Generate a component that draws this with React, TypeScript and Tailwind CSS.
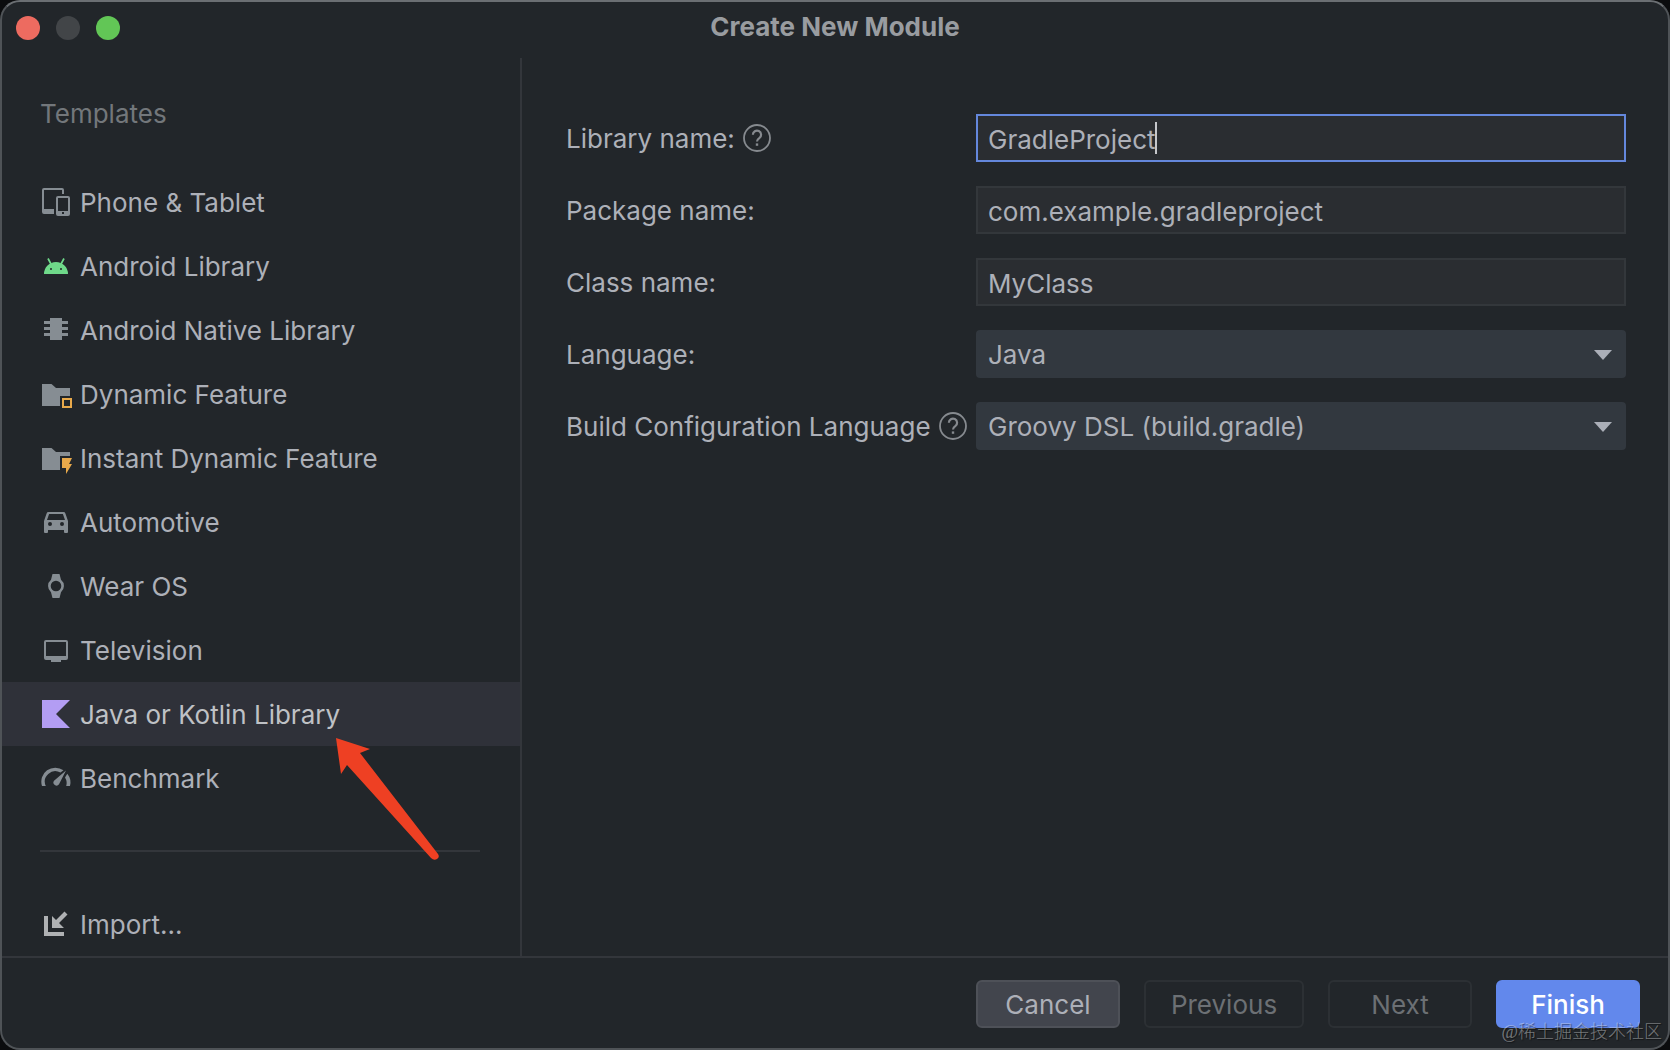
// Filename: src/App.tsx

import { useState } from "react";
import type { ReactNode } from "react";
import clsx from "clsx";

interface IconProps {
  children: ReactNode;
  className?: string;
}

function Icon({ children, className = "text-[#868d93]" }: IconProps) {
  return (
    <svg viewBox="0 0 32 32" fill="currentColor" aria-hidden="true" className={clsx("w-8 h-8 shrink-0", className)}>
      {children}
    </svg>
  );
}

const templates = [
  {
    name: "Phone & Tablet",
    icon: (
      <Icon>
        <path d="M4 2h18a2 2 0 0 1 2 2v4h-2V4H4v19h10v5H4a2 2 0 0 1-2-2V4a2 2 0 0 1 2-2z" />
        <path fillRule="evenodd" d="M18 10h10a2 2 0 0 1 2 2v16a2 2 0 0 1-2 2H18a2 2 0 0 1-2-2V12a2 2 0 0 1 2-2zm0 2v13h10V12zm4 14v2h2v-2z" />
      </Icon>
    ),
  },
  {
    name: "Android Library",
    icon: (
      <Icon className="text-[#6fd98a]">
        <path fillRule="evenodd" d="M4 24a12 12 0 0 1 24 0zM11 18a1 1 0 1 0 0 2 1 1 0 0 0 0-2zm10 0a1 1 0 1 0 0 2 1 1 0 0 0 0-2z" />
        <path d="M8 8.500l3 5.500M24 8.500l-3 5.500" stroke="currentColor" strokeWidth="1.700" fill="none" />
      </Icon>
    ),
  },
  {
    name: "Android Native Library",
    icon: (
      <Icon>
        <path d="M10 4h12v22H10zM4 7h6v3H4zM4 13h6v3H4zM4 19h6v3H4zM22 7h6v3h-6zM22 13h6v3h-6zM22 19h6v3h-6z" />
      </Icon>
    ),
  },
  {
    name: "Dynamic Feature",
    icon: (
      <Icon>
        <path d="M2 6h9.500l4.500 4h14v8H20v10H2z" />
        <path d="M23 21h8v8h-8z" fill="none" stroke="#e8a94b" strokeWidth="2" />
      </Icon>
    ),
  },
  {
    name: "Instant Dynamic Feature",
    icon: (
      <Icon>
        <path d="M2 6h9.500l4.500 4h14v4H20v14H2z" />
        <path d="M22 16h10l-3 6h3l-6 10v-6h-4z" fill="#e8a94b" />
      </Icon>
    ),
  },
  {
    name: "Automotive",
    icon: (
      <Icon>
        <path
          fillRule="evenodd"
          d="M8.500 6h15a2 2 0 0 1 1.900 1.400L28 15v11a1 1 0 0 1-1 1h-2a1 1 0 0 1-1-1v-2H8v2a1 1 0 0 1-1 1H5a1 1 0 0 1-1-1V15l2.600-7.600A2 2 0 0 1 8.500 6zm.6 2L7 14h18l-2.100-6zM10 16a2 2 0 1 0 0 4 2 2 0 0 0 0-4zm12 0a2 2 0 1 0 0 4 2 2 0 0 0 0-4z"
        />
      </Icon>
    ),
  },
  {
    name: "Wear OS",
    icon: (
      <Icon>
        <path fillRule="evenodd" d="M12.500 4h7l1.500 5.800a8 8 0 0 1 0 12.400L19.500 28h-7L11 22.200a8 8 0 0 1 0-12.400zM16 10.700a5.300 5.300 0 1 0 0 10.600 5.300 5.300 0 0 0 0-10.600z" />
      </Icon>
    ),
  },
  {
    name: "Television",
    icon: (
      <Icon>
        <path fillRule="evenodd" d="M6 6h20a2 2 0 0 1 2 2v16a2 2 0 0 1-2 2h-5v2H11v-2H6a2 2 0 0 1-2-2V8a2 2 0 0 1 2-2zm0 2v14h20V8z" />
      </Icon>
    ),
  },
  {
    name: "Java or Kotlin Library",
    icon: (
      <Icon className="text-[#b39df3]">
        <path d="M2 2h28L16 16l14 14H2z" />
      </Icon>
    ),
  },
  {
    name: "Benchmark",
    icon: (
      <Icon>
        <path d="M2 24a14 14 0 0 1 21.500-15.700l-3 2.200A10.500 10.500 0 0 0 5.800 24z" />
        <path d="M27.300 11.800A14 14 0 0 1 30 24h-3.800a10.500 10.500 0 0 0-1.200-8.500z" />
        <path d="M26 8.500L19 22.200a3 3 0 1 1-5-3.400z" />
      </Icon>
    ),
  },
];

function HelpIcon() {
  return (
    <svg viewBox="0 0 28 28" fill="none" stroke="#868a8f" aria-hidden="true" className="w-7 h-7 shrink-0">
      <circle cx="14" cy="14" r="13" strokeWidth="1.800" />
      <path d="M9.900 10.800a4.100 4.100 0 1 1 6.400 3.300c-1.500 1-2.300 1.700-2.300 3.400" strokeWidth="2.200" />
      <path d="M14 19.400v2.400" strokeWidth="2.400" />
    </svg>
  );
}

interface FieldProps {
  id: string;
  label: string;
  help?: boolean;
  children: ReactNode;
}

function Field({ id, label, help = false, children }: FieldProps) {
  return (
    <div className="flex items-center">
      <div className="flex items-center gap-2 w-[410px] shrink-0">
        <label htmlFor={id} className="pt-0.5 whitespace-nowrap">{label}</label>
        {help && <HelpIcon />}
      </div>
      <div className="relative flex-1 min-w-0">{children}</div>
    </div>
  );
}

const inputClass =
  "block w-full h-12 pt-0.5 px-2.5 bg-[#2a2d31] border-2 border-[#33373b] outline-none focus:border-[#6487dc]";

interface SelectProps {
  id: string;
  options: string[];
}

function Select({ id, options }: SelectProps) {
  return (
    <>
      <select id={id} className="block w-full h-12 pt-0.5 px-3 rounded bg-[#32383f] appearance-none outline-none">
        {options.map((option) => (
          <option key={option}>{option}</option>
        ))}
      </select>
      <svg viewBox="0 0 18 10" aria-hidden="true" className="absolute right-3.5 top-5 w-[18px] h-2.5 pointer-events-none">
        <path d="M0 0h18L9 10z" fill="#abafb8" />
      </svg>
    </>
  );
}

function Sidebar() {
  const [selected, setSelected] = useState("Java or Kotlin Library");

  return (
    <aside className="relative w-[520px] shrink-0 border-r-2 border-[#33363b] flex flex-col">
      <h2 className="pt-9 pl-[38px] leading-10 text-[#73777b]">Templates</h2>
      <nav className="mt-9">
        {templates.map(({ name, icon }) => (
          <button
            key={name}
            type="button"
            onClick={() => setSelected(name)}
            className={clsx(
              "flex items-center gap-2 w-full h-16 pl-[38px] text-left",
              selected === name && "bg-[#2f3139] text-[#bfc1c5]"
            )}
          >
            {icon}
            <span className="pt-0.5">{name}</span>
          </button>
        ))}
      </nav>
      <hr className="mt-10 ml-[38px] mr-10 border-t-2 border-[#33363b]" />
      <button type="button" className="flex items-center gap-2 h-16 mt-10 pl-[38px] text-left">
        <Icon className="text-[#afb1b3]">
          <path d="M4 8h4v16h16v4H4z" />
          <path d="M12 8l4 4 8.500-8.500 3 3L19 15l5 5H12z" />
        </Icon>
        <span className="pt-0.5">Import...</span>
      </button>

      {/* Pointer to the selected template */}
      <svg viewBox="0 0 104 124" aria-hidden="true" className="absolute left-[333px] top-[679px] w-[104px] h-[124px] pointer-events-none">
        <path d="M1 1l34 11-10 4 78 101q2 3-1 5-3 2-6-1L12 28l-6 9z" fill="#ee4023" />
      </svg>
    </aside>
  );
}

const buttonClass = "h-12 pt-0.5 rounded-md border-2 text-center";

export default function App() {
  const [libraryName, setLibraryName] = useState("GradleProject");
  const [packageName, setPackageName] = useState("com.example.gradleproject");
  const [className, setClassName] = useState("MyClass");

  return (
    <div className="min-h-screen flex bg-[#0b0c0e] font-['Inter',sans-serif] text-[26px] leading-8 text-[#adb0b8]">
      <div className="relative flex-1 flex flex-col rounded-[20px] border-2 border-[#4f5357] border-t-[#6b6f73] bg-[#22262a]">
        <header className="relative flex items-center justify-center h-14 pb-1.5">
          <div className="absolute left-3.5 top-3.5 flex gap-4">
            <button type="button" aria-label="Close" className="size-6 rounded-full bg-[#ed6b60]" />
            <button type="button" aria-label="Minimize" className="size-6 rounded-full bg-[#424548]" />
            <button type="button" aria-label="Zoom" className="size-6 rounded-full bg-[#62c656]" />
          </div>
          <h1 className="font-bold text-[#999ca0]">Create New Module</h1>
        </header>

        <main className="flex-1 flex">
          <Sidebar />
          <form className="flex-1 min-w-0 flex flex-col gap-6 pt-14 pl-11 pr-[42px]">
            <Field id="library" label="Library name:" help>
              <input
                id="library"
                autoFocus
                value={libraryName}
                onChange={(e) => setLibraryName(e.target.value)}
                className={clsx(inputClass, "caret-transparent")}
              />
              <span className="absolute left-[179px] top-2 w-0.5 h-8 bg-[#c5c7cb]" />
            </Field>
            <Field id="package" label="Package name:">
              <input
                id="package"
                value={packageName}
                onChange={(e) => setPackageName(e.target.value)}
                className={inputClass}
              />
            </Field>
            <Field id="class" label="Class name:">
              <input
                id="class"
                value={className}
                onChange={(e) => setClassName(e.target.value)}
                className={inputClass}
              />
            </Field>
            <Field id="language" label="Language:">
              <Select id="language" options={["Java", "Kotlin"]} />
            </Field>
            <Field id="dsl" label="Build Configuration Language" help>
              <Select id="dsl" options={["Groovy DSL (build.gradle)", "Kotlin DSL (build.gradle.kts)"]} />
            </Field>
          </form>
        </main>

        <footer className="flex justify-end gap-6 pt-[22px] pb-5 pr-7 border-t-2 border-[#33363b]">
          <button type="button" className={clsx(buttonClass, "w-36 bg-[#42454d] border-[#4e5158]")}>Cancel</button>
          <button type="button" disabled className={clsx(buttonClass, "w-40 border-[#2c3034] text-[#6c7074]")}>Previous</button>
          <button type="button" disabled className={clsx(buttonClass, "w-36 border-[#2c3034] text-[#6c7074]")}>Next</button>
          <button type="button" className={clsx(buttonClass, "w-36 bg-[#6288ec] border-[#6288ec] text-white font-medium")}>Finish</button>
        </footer>

        <span className="absolute right-1.5 bottom-1 text-lg leading-6 text-white/40 font-['Liberation_Serif','Noto_Sans_CJK_SC',serif] font-light whitespace-nowrap [text-shadow:1px_1px_1px_rgba(0,0,0,0.5)]">
          @稀土掘金技术社区
        </span>
      </div>
    </div>
  );
}
